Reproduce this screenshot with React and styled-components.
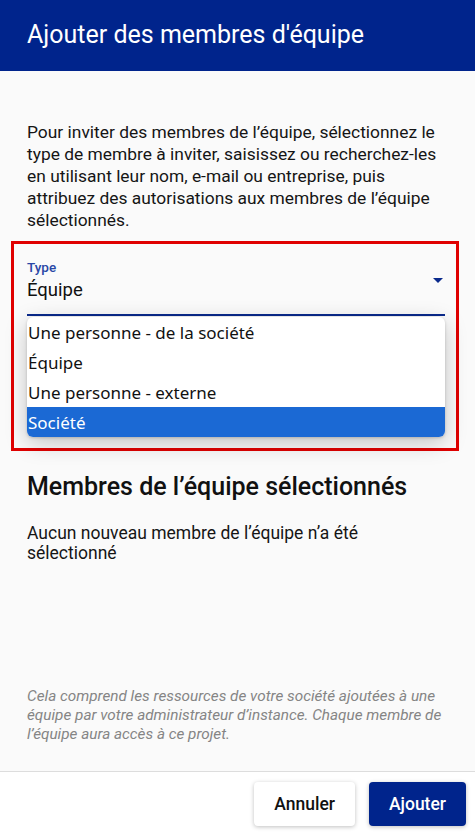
import { createGlobalStyle } from "styled-components";
import styled from "styled-components";

const GlobalStyle = createGlobalStyle`
  html, body {
    margin: 0;
    padding: 0;
    background: #fafafa;
  }
  body {
    font-family: Roboto, "Liberation Sans", sans-serif;
    color: #111;
  }
  #root {
    min-height: 835px;
    display: flex;
    flex-direction: column;
  }
`;

const options = [
  "Une personne - de la société",
  "Équipe",
  "Une personne - externe",
  "Société",
];

export default function App() {
  const selected = "Société";

  return (
    <>
      <GlobalStyle />
      <Page>
        <Header>
          <Titre>Ajouter des membres d'équipe</Titre>
        </Header>
        <Corpo>
          <Intro>
            Pour inviter des membres de l’équipe, sélectionnez le type de membre
            à inviter, saisissez ou recherchez-les en utilisant leur nom, e-mail
            ou entreprise, puis attribuez des autorisations aux membres de
            l’équipe sélectionnés.
          </Intro>
          <Destaque>
            <Campo>
              <Rotulo>Type</Rotulo>
              <Valor>
                Équipe
                <Seta />
              </Valor>
            </Campo>
            <Lista>
              {options.map((op) => (
                <Opcao key={op} $ativo={op === selected}>
                  {op}
                </Opcao>
              ))}
            </Lista>
          </Destaque>
          <Subtitulo>Membres de l’équipe sélectionnés</Subtitulo>
          <Vazio>Aucun nouveau membre de l’équipe n’a été sélectionné</Vazio>
          <Nota>
            Cela comprend les ressources de votre société ajoutées à une équipe
            par votre administrateur d’instance. Chaque membre de l’équipe aura
            accès à ce projet.
          </Nota>
        </Corpo>
        <Rodape>
          <Botao>Annuler</Botao>
          <Botao $primario>Ajouter</Botao>
        </Rodape>
      </Page>
    </>
  );
}

const Page = styled.div`
  flex: 1;
  display: flex;
  flex-direction: column;
  min-height: 835px;
`;

const Header = styled.header`
  height: 71px;
  background: #00248c;
  display: flex;
  align-items: center;
  padding: 0 27px;
  box-sizing: border-box;
`;

const Titre = styled.h1`
  margin: 0;
  font-size: 25px;
  font-weight: 400;
  color: #ffffff;
  line-height: 30px;
  padding-bottom: 1px;
`;

const Corpo = styled.main`
  flex: 1;
  display: flex;
  flex-direction: column;
  padding: 50px 29px 27px 27px;
`;

const Intro = styled.p`
  margin: 0;
  font-size: 17.4px;
  line-height: 22px;
  color: #151515;
`;

const Destaque = styled.div`
  margin: 10px -13px 0 -16px;
  border: 3px solid #e00000;
  padding: 14px 11px 11px 13px;
`;

const Campo = styled.div`
  border-bottom: 2px solid #0a2a8c;
  padding-bottom: 12px;
`;

const Rotulo = styled.div`
  font-size: 13.5px;
  line-height: 18px;
  color: #2947a6;
  font-weight: 500;
`;

const Valor = styled.div`
  display: flex;
  align-items: center;
  justify-content: space-between;
  font-size: 18.5px;
  line-height: 24px;
  margin-top: 2px;
  color: #111;
`;

const Seta = styled.span`
  width: 0;
  height: 0;
  border-left: 5px solid transparent;
  border-right: 5px solid transparent;
  border-top: 5px solid #0a2a8c;
  margin-right: 2px;
  margin-top: -19px;
`;

const Lista = styled.ul`
  list-style: none;
  margin: 1px 0 0;
  padding: 0;
  background: #ffffff;
  border-radius: 6px;
  overflow: hidden;
  box-shadow: 0 6px 22px rgba(0, 0, 0, 0.22), 0 1px 3px rgba(0, 0, 0, 0.18);
`;

const Opcao = styled.li`
  height: 30px;
  display: flex;
  align-items: center;
  padding: 0 1px;
  font-family: "Noto Sans", "Open Sans", sans-serif;
  font-size: 17px;
  color: ${(p) => (p.$ativo ? "#ffffff" : "#111111")};
  background: ${(p) => (p.$ativo ? "#1b69d4" : "transparent")};
`;

const Subtitulo = styled.h2`
  margin: 21px 0 0;
  font-size: 25px;
  line-height: 30px;
  font-weight: 500;
  color: #111;
`;

const Vazio = styled.p`
  margin: 21px 0 0;
  font-size: 17.5px;
  line-height: 20px;
  color: #151515;
`;

const Nota = styled.p`
  margin: auto 0 0;
  font-size: 15.3px;
  line-height: 19px;
  font-style: italic;
  color: #858585;
`;

const Rodape = styled.footer`
  height: 64px;
  box-sizing: border-box;
  border-top: 1px solid #dddddd;
  background: #ffffff;
  display: flex;
  justify-content: flex-end;
  align-items: center;
  gap: 14px;
  padding: 0 9px 0 0;
`;

const Botao = styled.button`
  height: 44px;
  padding: 0 20px;
  border: none;
  border-radius: 4px;
  font-family: Roboto, "Liberation Sans", sans-serif;
  font-size: 17.5px;
  font-weight: 500;
  color: ${(p) => (p.$primario ? "#ffffff" : "#111111")};
  background: ${(p) => (p.$primario ? "#00248c" : "#ffffff")};
  box-shadow: 0 1px 4px rgba(0, 0, 0, 0.25);
  cursor: pointer;
`;
